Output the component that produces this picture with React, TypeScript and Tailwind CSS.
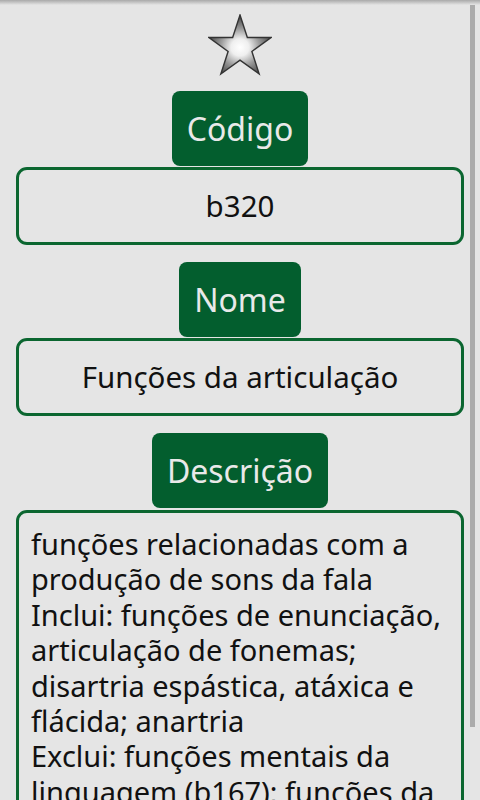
import React from 'react';

const Star: React.FC = () => {
  const cx = 32, cy = 33.6, R = 32.6, r = 12.5;
  const pts: string[] = [];
  for (let i = 0; i < 10; i++) {
    const a = ((-90 + i * 36) * Math.PI) / 180;
    const rad = i % 2 === 0 ? R : r;
    pts.push(`${(cx + rad * Math.cos(a)).toFixed(2)},${(cy + rad * Math.sin(a)).toFixed(2)}`);
  }
  return (
    <svg width="64" height="64" viewBox="0 0 64 64" className="block">
      <defs>
        <radialGradient id="starFill" cx="50%" cy="55%" r="52%">
          <stop offset="0%" stopColor="#ffffff" />
          <stop offset="28%" stopColor="#efefef" />
          <stop offset="60%" stopColor="#9c9c9c" />
          <stop offset="100%" stopColor="#4a4a4a" />
        </radialGradient>
      </defs>
      <polygon points={pts.join(' ')} fill="url(#starFill)" stroke="#333333" strokeWidth="1.4" strokeLinejoin="miter" />
    </svg>
  );
};

const Label: React.FC<{ children: React.ReactNode }> = ({ children }) => (
  <div className="h-[75px] px-[15px] flex items-center justify-center rounded-[8px] bg-[#035e2e] text-[#e9e9e9] text-[32px]">
    {children}
  </div>
);

const ValueBox: React.FC<{ children: React.ReactNode }> = ({ children }) => (
  <div className="w-full h-[78px] mt-[1px] flex items-center justify-center rounded-[11px] border-[3px] border-[#0b6630] text-[29.5px] text-[#111]">
    {children}
  </div>
);

export default function App() {
  return (
    <div
      className="relative w-[480px] h-[800px] overflow-hidden bg-[#e5e5e5]"
      style={{ fontFamily: '"Noto Sans", "Open Sans", sans-serif' }}
    >
      <div className="absolute top-0 left-0 right-0 h-[5px] bg-gradient-to-b from-[#a9a9a9] to-[#e5e5e5]" />
      <div className="absolute top-[5px] left-[470px] w-[5px] h-[722px] bg-[#ababab]" />

      <div className="flex flex-col items-center px-4 pt-[14px]">
        <Star />
        <div className="mt-[13px]">
          <Label>Código</Label>
        </div>
        <ValueBox>b320</ValueBox>

        <div className="mt-[17px]">
          <Label>Nome</Label>
        </div>
        <ValueBox>Funções da articulação</ValueBox>

        <div className="mt-[17px]">
          <Label>Descrição</Label>
        </div>
        <div className="w-full mt-[2px] rounded-[11px] border-[3px] border-[#0b6630] pt-[13px] pb-4 px-3 text-[29px] leading-[35.4px] text-[#111]">
          funções relacionadas com a produção de sons da fala
          <br />
          Inclui: funções de enunciação, articulação de fonemas; disartria espástica, atáxica e flácida; anartria
          <br />
          Exclui: funções mentais da linguagem (b167); funções da voz (b310)
        </div>
      </div>
    </div>
  );
}
